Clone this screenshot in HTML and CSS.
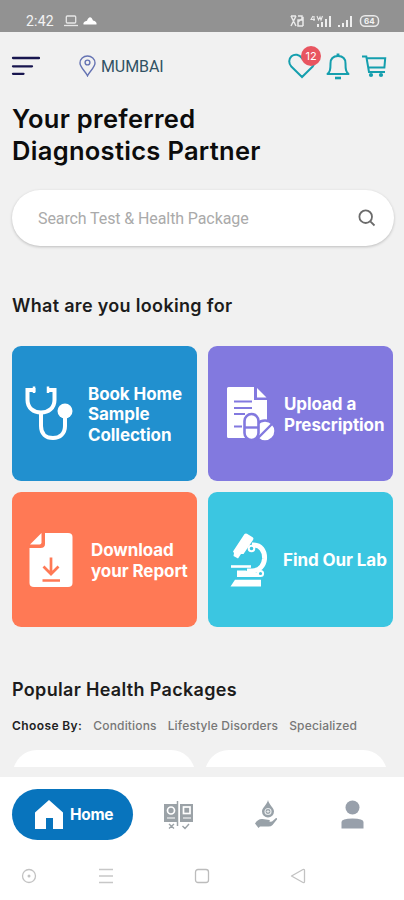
FILE: index.html
```html
<!DOCTYPE html>
<html lang="en">
<head>
  <meta charset="UTF-8" />
  <meta name="viewport" content="width=device-width, initial-scale=1.0"/>
  <title>Diagnostics - Home</title>
  <link rel="stylesheet" href="styles.css">
</head>
<body>

  <div class="status-bar">
    <span class="time">2:42</span>
    <svg class="laptop" width="14" height="12" viewBox="0 0 14 12" fill="none" stroke="#e6e6e6" stroke-width="1.3"><rect x="2.3" y="1" width="9.4" height="7" rx="1"/><path d="M0 10.5h14"/></svg>
    <svg width="14" height="9" viewBox="0 0 14 9" fill="#fff"><path d="M.5 8.500C0 6.500 2 5 4 4.800 5.500 0 8.500 0 10 4.500 12.500 5 14 6.500 13.500 8.500z"/></svg>
    <div class="signals">
      <svg width="90" height="14" viewBox="0 0 90 14">
        <g fill="none" stroke="#e9e9e9" stroke-width="1.500">
          <path d="M1 2l5 10M6 2L1 12M1 2h5M8 2h4v4H8v6h5M8 8l5-4v8"/>
          <path d="M23 2l-2 3.500h4M24 2v5M27 2l1.500 4L30 3l1 3 1.500-4" stroke-width="1.100"/>
          <rect x="70.500" y="1.700" width="18" height="10.600" rx="4.500"/>
        </g>
        <path d="M27 10h2v3h-2zM31 8h2v5h-2zM35 5h2v8h-2zM39 2h2v11h-2zM48 11h2v2h-2zM52 9h2v4h-2zM56 6h2v7h-2zM60 2h2v11h-2z" fill="#eee"/>
      </svg>
      <span class="battery">64</span>
    </div>
  </div>

  <div class="top-bar">
    <svg class="menu" width="29" height="20" viewBox="0 0 29 20" stroke="#18164f" stroke-width="2.300" stroke-linecap="round"><path d="M2 2h26M2 10.300h19M2 17.800h10.500"/></svg>
    <svg class="pin" width="17" height="22" viewBox="0 0 17 22" fill="none" stroke="#6573b3" stroke-width="1.400"><path d="M8.500 20.800C7 17 1 12.500 1 8a7.500 7 0 0 1 15 0c0 4.500-6 9-7.500 12.800z"/><circle cx="8.500" cy="7.500" r="2.400"/></svg>
    <span class="city">MUMBAI</span>
    <div class="actions">
      <div class="wishlist">
        <svg width="28" height="26" viewBox="0 0 28 26" fill="none" stroke="#159fae" stroke-width="2"><path d="M14 24L3.300 13.500C.5 10.500 .5 6 3.500 3.300 6.800.5 11.200 1.500 14 5.200 16.800 1.500 21.200.5 24.500 3.300c3 2.700 3 7.200.2 10.200z"/></svg>
        <span class="badge">12</span>
      </div>
      <svg class="bell" width="24" height="27" viewBox="0 0 24 27" fill="none" stroke="#159fae" stroke-width="2"><path d="M1.500 21c2.500-2.500 3-4 3-10.500 0-5 3-7.500 7.500-7.500s7.500 2.500 7.500 7.500c0 6.500.5 8 3 10.500z" stroke-linejoin="round"/><path d="M9 25h6" stroke-width="2.600"/><path d="M12 .500v3" stroke-width="2.800"/></svg>
      <svg class="cart" width="25" height="23" viewBox="0 0 25 23" fill="none" stroke="#159fae" stroke-width="2"><path d="M0 1.500h4.300L7 17h16M5 3.200h18.200l-.8 9.300H6.200"/><g fill="#159fae" stroke="none"><circle cx="9" cy="20" r="2.100"/><circle cx="19" cy="20" r="2.100"/></g></svg>
    </div>
  </div>

  <div class="content">
    <h1>Your preferred<br>Diagnostics Partner</h1>

    <div class="search">
      <span>Search Test &amp; Health Package</span>
      <svg width="18" height="18" viewBox="0 0 18 18" fill="none" stroke="#6b6b6b" stroke-width="1.800"><circle cx="7.700" cy="7.700" r="6.300"/><path d="M12.300 12.300l4.200 4.200"/></svg>
    </div>

    <h2>What are you looking for</h2>

    <div class="tiles">
      <div class="tile book">
        <svg width="48" height="56" viewBox="0 0 48 56" fill="none" stroke="#fff" stroke-width="4"><path d="M10.500 4H2.500v10c0 8 6 12.500 13.500 12.500S29.500 22 29.500 14V4h-7.500"/><path d="M9 .5v6.500M23 .5v6.500" stroke-width="2.500"/><path d="M16 26v14c0 8 5 12 12 12s12-4.500 12-12V27"/><circle cx="40" cy="25" r="7.500" fill="#fff" stroke="none"/></svg>
        <span>Book Home<br>Sample<br>Collection</span>
      </div>
      <div class="tile upload">
        <svg width="49" height="56" viewBox="0 0 49 56"><path d="M2.500 1H28v13h13v38H2.500Q1 52 1 50.500V2.500Q1 1 2.500 1z" fill="#fff"/><path d="M31 2l9.500 9.500H31z" fill="#fff"/><path d="M8 15.500h18M8 22h18M8 28h11M8 40.500h8" stroke="#8279df" stroke-width="2.200"/><circle cx="39" cy="45" r="10.500" fill="#fff" stroke="#8279df" stroke-width="2.400"/><path d="M32 52l14-14" stroke="#8279df" stroke-width="2.400"/><rect x="18.500" y="28" width="14" height="26" rx="7" fill="#fff" stroke="#8279df" stroke-width="2.600"/><path d="M18.500 41.500h14" stroke="#8279df" stroke-width="2.400"/></svg>
        <span>Upload a<br>Prescription</span>
      </div>
      <div class="tile download">
        <svg width="45" height="56" viewBox="0 0 45 56"><path d="M16 1h23q4.500 0 4.500 4v46q0 4-4.500 4H5q-4.500 0-4.500-4V16h11q4.500 0 4.500-4z" fill="#fff"/><path d="M1 12.500L12.500 1v9.500q0 2-2 2z" fill="#fff"/><path d="M22 25.500v15.500M14.500 34.500l7.500 7.500 7.500-7.500M13.500 48.500h17.500" fill="none" stroke="#ff7955" stroke-width="2.700"/></svg>
        <span>Download<br>your Report</span>
      </div>
      <div class="tile lab">
        <svg width="39" height="55" viewBox="0 0 39 55"><path d="M14.500 1Q15.500 0 17 .7L23 4.500q1 1 0 2.500L13.500 21l-2.500 0-3 4.500-4.500-2.500.5-3-1-1.500z" fill="#fff"/><path d="M22 12C31 11.500 35 18 34.500 26c-.7 7-5.500 11.500-12 12H17" fill="none" stroke="#fff" stroke-width="5"/><circle cx="21.500" cy="15.500" r="2.800" fill="#3bc6e1" stroke="#fff" stroke-width="2"/><path d="M1 33.500h20" stroke="#fff" stroke-width="2.600"/><path d="M7 37.500h9l4 2h11v4.500H7zM5 46.800h26V53.500H.500z" fill="#fff"/><circle cx="30.500" cy="40.500" r="2.600" fill="#3bc6e1" stroke="#fff" stroke-width="2"/></svg>
        <span>Find Our Lab</span>
      </div>
    </div>

    <h2 class="popular">Popular Health Packages</h2>
    <div class="filters">
      <b>Choose By:</b>
      <span>Conditions</span>
      <span>Lifestyle Disorders</span>
      <span>Specialized</span>
    </div>
    <div class="packages">
      <div class="package"></div>
      <div class="package"></div>
    </div>
  </div>

  <div class="tab-bar">
    <div class="tab active">
      <svg width="28" height="29" viewBox="0 0 28 29" fill="#fff"><path d="M14 0l14 12.500V29H18V18h-7v11H0V12.500z"/></svg>
      <span>Home</span>
    </div>
    <div class="tab compare">
      <svg width="30" height="30" viewBox="0 0 30 30" fill="none" stroke="#9ba2a7"><path d="M0 4h13v18H0zM16 4h13v18H16z" fill="#9ba2a7" stroke="none"/><path d="M13.500 1v25" stroke-width="1.500"/><circle cx="7" cy="10.500" r="3.500" stroke="#fff" stroke-width="1.700"/><rect x="19.500" y="7" width="6.500" height="6.500" stroke="#fff" stroke-width="1.700"/><path d="M3 18h8M19 18h8" stroke="#fff"/><path d="M5 24l5 4.500M10 24l-5 4.500M18.500 26l2.500 2.500 4-4.500" stroke-width="1.400"/></svg>
    </div>
    <div class="tab donate">
      <svg width="22" height="29" viewBox="0 0 22 29" fill="#98a1a8"><path d="M13 0C12 5 7 7.500 7 11.500a6 6 0 0 0 12 0C19 7.500 14 5 13 0z"/><circle cx="13" cy="11.500" r="3" fill="none" stroke="#e8ebec" stroke-width="1.200"/><path d="M11.500 11.500h3M13 10v3" stroke="#e8ebec"/><path d="M0 23.500q3-5 7.500-4.500l7 1q1 1.500-1 2l3.500-.5 4-3.500q2 0 .5 2l-4 5q-1.500 1.500-4 1.500H5l-1.500 1.500z"/></svg>
    </div>
    <div class="tab">
      <svg width="23" height="29" viewBox="0 0 23 29" fill="#98a0ab"><circle cx="11.500" cy="7.500" r="7"/><path d="M.5 28.500V22q0-3.500 11-3.500t11 3.500v6.500z"/></svg>
    </div>
  </div>

  <div class="system-nav">
    <svg width="16" height="16" viewBox="0 0 16 16" fill="none" stroke="#c2c2c2" stroke-width="1.300"><circle cx="8" cy="8" r="6.500"/><circle cx="8" cy="8" r="1.500" fill="#c2c2c2" stroke="none"/></svg>
    <svg width="16" height="16" viewBox="0 0 16 16" stroke="#c7c7c7" stroke-width="1.400"><path d="M1 1.500h14M1 8h14M1 14.500h14"/></svg>
    <svg width="16" height="16" viewBox="0 0 16 16" fill="none" stroke="#bcbcbc" stroke-width="1.300"><rect x="1.500" y="1.500" width="13" height="13" rx="2.500"/></svg>
    <svg width="16" height="16" viewBox="0 0 16 16" fill="none" stroke="#c2c2c2" stroke-width="1.300" stroke-linejoin="round"><path d="M1.500 8L13 1.500q1.500-.5 1.500 1v11q0 1.500-1.500 1z"/></svg>
  </div>

</body>
</html>
```
FILE: styles.css
```css
* {
  box-sizing: border-box;
}

body {
  margin: 0;
  width: 404px;
  height: 900px;
  overflow: hidden;
  display: flex;
  flex-direction: column;
  background: #f1f1f1;
  color: #111;
  font-family: Inter, "Liberation Sans", sans-serif;
}

svg {
  display: block;
  flex: none;
}

.status-bar {
  height: 32px;
  padding: 9px 24px 0 26px;
  display: flex;
  align-items: center;
  background: #929292;
  color: #f3f3f3;
}

.time {
  width: 38px;
  font-family: Roboto, sans-serif;
  font-size: 14px;
  letter-spacing: 0.2px;
}

.laptop {
  margin-right: 5px;
}

.signals {
  margin-left: auto;
  position: relative;
}

.battery {
  position: absolute;
  left: 74px;
  top: 2px;
  font-size: 8px;
  font-weight: 700;
}

.top-bar {
  height: 68px;
  padding: 0 17px 0 11px;
  display: flex;
  align-items: center;
}

.pin {
  margin-left: 39px;
}

.city {
  margin-left: 5px;
  font-family: Roboto, sans-serif;
  font-size: 16px;
  letter-spacing: -0.1px;
  color: #305164;
}

.actions {
  margin-left: auto;
  display: flex;
  align-items: center;
}

.wishlist {
  position: relative;
}

.badge {
  position: absolute;
  top: -7px;
  left: 13px;
  width: 20px;
  height: 20px;
  border-radius: 50%;
  background: #e85560;
  color: #fff;
  font-size: 11px;
  line-height: 20px;
  text-align: center;
}

.bell {
  margin-left: 10px;
}

.cart {
  margin-left: 12px;
}

.content {
  height: 677px;
  padding: 0 10px 0 12px;
}

h1 {
  margin: 3px 0 0;
  font-size: 25.5px;
  font-weight: 600;
  line-height: 31.5px;
  letter-spacing: 0.3px;
  color: #0c0c0c;
}

.search {
  height: 56px;
  margin-top: 24px;
  padding: 0 18px 0 26px;
  display: flex;
  align-items: center;
  justify-content: space-between;
  border-radius: 28px;
  background: #fff;
  box-shadow: 0 1px 3px rgba(0,0,0,0.22);
  font-family: Roboto, sans-serif;
  font-size: 16px;
  letter-spacing: -0.1px;
  color: #aaa;
}

h2 {
  margin: 47px 0 0;
  font-size: 18px;
  font-weight: 600;
  line-height: 26px;
  letter-spacing: 0.32px;
  color: #1c1c1c;
}

.tiles {
  margin-top: 27px;
  display: grid;
  grid-template-columns: 185px 185px;
  grid-auto-rows: 135px;
  gap: 11px;
}

.tile {
  padding-top: 1px;
  display: flex;
  align-items: center;
  border-radius: 9px;
  color: #fff;
  font-size: 17px;
  font-weight: 700;
  line-height: 20.5px;
  letter-spacing: -0.08px;
  white-space: nowrap;
}

.tile span {
  padding-top: 1px;
}

.book {
  padding-left: 13px;
  gap: 15px;
  background: #2190cf;
}

.upload {
  padding-left: 18px;
  gap: 9px;
  background: #8279df;
}

.download {
  padding-left: 17px;
  gap: 17px;
  background: #ff7955;
}

.lab {
  padding-left: 22px;
  gap: 14px;
  background: #3bc6e1;
}

.popular {
  margin-top: 50px;
}

.filters {
  margin-top: 13px;
  height: 18px;
  display: flex;
  align-items: center;
  gap: 11px;
  font-size: 12px;
  font-weight: 500;
  letter-spacing: 0.16px;
  color: #777;
  white-space: nowrap;
}

.filters b {
  font-weight: 600;
  letter-spacing: 0.4px;
  color: #222;
}

.packages {
  margin-top: 16px;
  padding-left: 1px;
  height: 17px;
  display: flex;
  gap: 10px;
  overflow: hidden;
}

.package {
  width: 182px;
  height: 120px;
  border-radius: 24px;
  background: #fff;
}

.tab-bar {
  height: 75px;
  padding: 12px 40px 12px 12px;
  display: flex;
  align-items: center;
  background: #fff;
}

.active {
  width: 121px;
  height: 51px;
  padding-left: 23px;
  display: flex;
  align-items: center;
  gap: 7px;
  border-radius: 26px;
  background: #0874bd;
  color: #fff;
  font-size: 15.5px;
  font-weight: 700;
  letter-spacing: -0.3px;
}

.compare {
  margin-left: 31px;
}

.donate {
  margin: 0 64px 0 61px;
}

.system-nav {
  flex: 1;
  padding: 16px 0 0 21px;
  display: grid;
  grid-template-columns: 77px 96px 96px 16px;
  align-items: start;
  background: #fff;
}
```
